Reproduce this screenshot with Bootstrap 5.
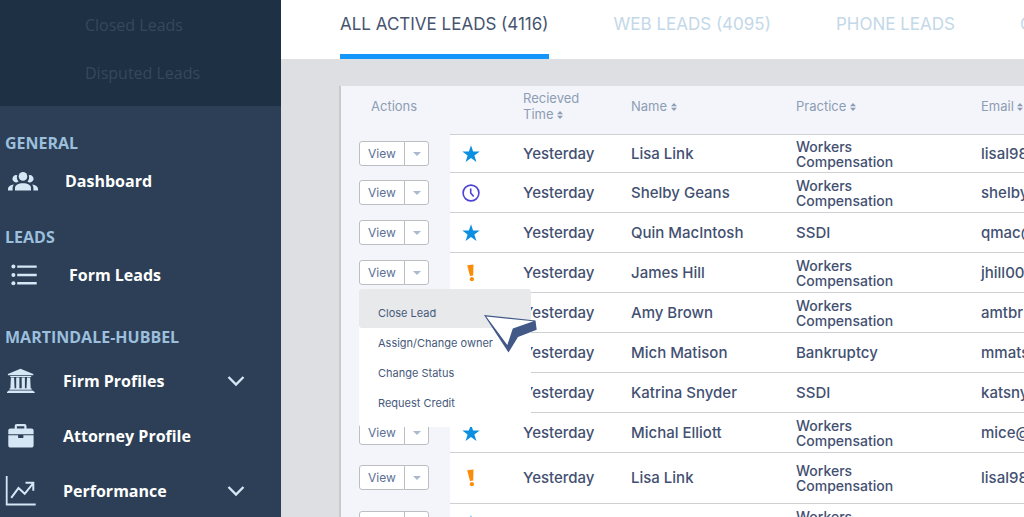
<!DOCTYPE html>
<html lang="en">
<head>
<meta charset="utf-8">
<meta name="viewport" content="width=device-width, initial-scale=1">
<title>Leads</title>
<link href="https://cdn.jsdelivr.net/npm/bootstrap@5.3.0/dist/css/bootstrap.min.css" rel="stylesheet">
<style>
  body { font-family: Inter, "Liberation Sans", sans-serif; background: #dddfe3; color: #435072; }
  a { text-decoration: none; }

  /* sidebar */
  .side { width: 281px; background: #2c3f56; font-family: "Open Sans", "Noto Sans", sans-serif; font-size: 16px; line-height: 24px; }
  .side-top { background: #1e3044; padding: 1px 0 9px 85px; }
  .side-top a { height: 48px; color: #374859; }
  .side-group { padding-top: 23px; }
  .side-group.tight { padding-top: 18px; }
  .side-group.wide { padding-top: 24px; }
  .side-group.wide .side-title { margin-bottom: 2px; }
  .side-title { height: 28px; margin-bottom: 0; padding-left: 5px; font-size: 16px; line-height: 28px; font-weight: 700; color: #9bbfdd; }
  .side-link { height: 48px; font-weight: 700; color: #fff; }
  .side-link.tall { height: 55px; }
  .side-icon { width: 65px; padding-left: 8px; color: #d5e6f5; }
  .tall .side-icon { width: 63px; padding-left: 5px; }
  .side-link .chev { margin-right: 36px; color: #d5e6f5; }

  /* tabs */
  .tabs { background: #fff; padding-left: 59px; gap: 65px; }
  .tabs a { padding: 12px 0 18px; border-bottom: 5px solid transparent; font-size: 17px; line-height: 24px; color: #c3d8e8; white-space: nowrap; }
  .tabs a.active { color: #46546f; border-color: #1496fb; }

  /* table */
  .sheet { margin: 27px 0 0 58px; border-left: 2px solid #c8cace; background: #f4f5fa; }
  .leads { width: 840px; table-layout: fixed; border-collapse: separate; border-spacing: 0; }
  .leads th { height: 48px; padding: 0 0 8px; font-size: 13px; line-height: 16px; font-weight: 400; color: #8c9db5; vertical-align: middle; white-space: nowrap; }
  .leads td { height: 40px; padding: 0; border-top: 1px solid #cfd0d3; background: #fff; font-size: 15px; line-height: 18px; font-weight: 500; vertical-align: middle; white-space: nowrap; }
  .leads tr.first td { height: 38px; }
  .leads tr.roomy td { height: 51px; }
  .leads td.act { border-top: 0; background: transparent; padding-left: 18px; }
  .leads td.two { font-size: 14px; line-height: 15px; white-space: normal; }
  .leads td.mark-cell { padding-left: 12px; }
  .c-act { width: 109px; } .c-mark { width: 73px; } .c-time { width: 108px; } .c-name { width: 165px; } .c-prac { width: 185px; }
  .leads th.act-head { padding-left: 30px; }
  .leads td svg, .side svg { display: block; }

  .split { width: 70px; height: 25px; }
  .split .btn { --bs-btn-border-color: #bcbec2; --bs-btn-bg: #fff; --bs-btn-color: #5a7195; --bs-btn-padding-x: 0; --bs-btn-padding-y: 0; --bs-btn-font-size: 12px; --bs-btn-line-height: 23px; --bs-btn-border-radius: 3px; }
  .split .view { flex: 0 0 46px; }
  .split .dropdown-toggle-split { flex: 0 0 25px; padding: 0; color: #a9b9cf; }
  .split .dropdown-toggle-split::after { border-top-width: 4px; border-left-width: 4px; border-right-width: 4px; vertical-align: 2px; }
  .menu { top: 100%; left: 0; margin-top: 4px; width: 172px; min-width: 0; padding: 0 0 9px; border: 0; border-radius: 3px; --bs-dropdown-bg: #fff; }
  .menu .dropdown-item { padding: 0 0 0 19px; font-size: 11px; line-height: 30px; color: #46597b; }
  .menu .dropdown-item.hot { padding-top: 9px; background: #e8e9eb; border-radius: 3px; }
  .pointer { position: absolute; left: 124px; top: 24px; }
</style>
</head>
<body class="vh-100 overflow-hidden">
<svg class="d-none" aria-hidden="true">
  <symbol id="star" viewBox="0 0 18 18"><path fill="#0b8fe0" d="M9 .3l2.100 6.300h6.600l-5.300 3.900 2 6.400L9 13l-5.400 3.900 2-6.400L.3 6.600h6.600z"/></symbol>
  <symbol id="clock" viewBox="0 0 18 18"><circle cx="9" cy="9" r="7.900" fill="none" stroke="#4a43d6" stroke-width="1.600"/><path d="M8.700 4.500V9l3 3.600" fill="none" stroke="#4a43d6" stroke-width="1.600"/></symbol>
  <symbol id="alert" viewBox="0 0 18 18"><path fill="#fb8c0a" d="M5.200 1.200L11.500.4l-.3 11.200-3.200.4z"/><circle cx="9.900" cy="15.200" r="2.100" fill="#fb8c0a"/></symbol>
  <symbol id="sort" viewBox="0 0 6 8"><path fill="currentColor" d="M3 0l3 3.200H0zM3 8L0 4.800h6z"/></symbol>
  <symbol id="chev" viewBox="0 0 18 12"><path d="M1.500 2l7.500 7.500L16.500 2" fill="none" stroke="currentColor" stroke-width="2.400"/></symbol>
</svg>
<div class="d-flex h-100">
  <nav class="side flex-shrink-0 overflow-hidden" aria-label="Main">
    <div class="side-top">
      <a href="#" class="d-flex align-items-center">Closed Leads</a>
      <a href="#" class="d-flex align-items-center">Disputed Leads</a>
    </div>
    <section class="side-group">
      <h2 class="side-title">GENERAL</h2>
      <a href="#" class="side-link d-flex align-items-center">
        <span class="side-icon"><svg width="30" height="19" viewBox="0 0 30 19" fill="currentColor"><circle cx="15" cy="4.400" r="4.300"/><path d="M7 18.500v-2.300c0-3 3.300-4.900 8-4.900s8 1.900 8 4.900v2.300z"/><path d="M9.300 3.300a3.600 3.600 0 1 0 1.200 6.100A6 6 0 0 1 9.300 3.300zM20.700 3.300a3.600 3.600 0 1 1-1.200 6.100 6 6 0 0 0 1.200-6.100z"/><path d="M0 18.500v-1.700c0-2.200 2.300-3.700 6-4.200-1 1-1.400 2.200-1.400 3.600v2.300zM30 18.500v-1.700c0-2.200-2.300-3.700-6-4.200 1 1 1.400 2.200 1.400 3.600v2.300z"/></svg></span>Dashboard</a>
    </section>
    <section class="side-group tight">
      <h2 class="side-title">LEADS</h2>
      <a href="#" class="side-link d-flex align-items-center">
        <span class="side-icon"><svg width="30" height="22" viewBox="0 0 30 22" fill="currentColor"><circle cx="5.400" cy="2.600" r="2"/><circle cx="5.400" cy="11" r="2"/><circle cx="5.400" cy="19.200" r="2"/><path d="M9.200 1.400h19.500v2.400H9.200zM9.200 9.800h19.500v2.400H9.200zM9.200 18h19.500v2.400H9.200z"/></svg></span><span class="ps-1">Form Leads</span></a>
    </section>
    <section class="side-group wide">
      <h2 class="side-title">MARTINDALE-HUBBEL</h2>
      <a href="#" class="side-link tall d-flex align-items-center">
        <span class="side-icon"><svg width="32" height="26" viewBox="0 0 32 26" fill="currentColor"><path d="M15.500.8L28.300 6v1.300H2.900V6zM5.200 7.900h21v1.200H5.200zM5.900 9.500h3.200l.5 11H5.400zM11.200 9.500h3.200v11h-3.200zM16.700 9.500h3.200v11h-3.200zM22 9.500h3.200l.5 11h-4.200zM4.600 20.300h22v1.500h-22zM2 24.900v-1l1.800-1.500h23.600l2.300 1.500v1z"/></svg></span>Firm Profiles
        <svg class="chev ms-auto" width="18" height="12"><use href="#chev"/></svg></a>
      <a href="#" class="side-link tall d-flex align-items-center">
        <span class="side-icon"><svg width="32" height="26" viewBox="0 0 32 26" fill="currentColor"><path fill-rule="evenodd" d="M9.700 5.500V3.200c0-1.500.8-2.200 2.200-2.200h7.400c1.400 0 2.200.7 2.200 2.200v2.300h4.800c1.500 0 2.300.8 2.300 2.300v3.500H3.300V7.800c0-1.500.8-2.300 2.300-2.300zm2.200 0h7.400V3.200h-7.400z"/><path d="M3.300 12.200h9.800v2c0 .6.300.9.900.9h3.500c.6 0 .9-.3.900-.9v-2h10.200v10c0 1.500-.8 2.300-2.300 2.300H5.600c-1.500 0-2.300-.8-2.300-2.300z"/></svg></span>Attorney Profile</a>
      <a href="#" class="side-link tall d-flex align-items-center">
        <span class="side-icon"><svg width="32" height="32" viewBox="0 0 32 32" fill="none" stroke="currentColor"><path stroke-width="1.800" d="M1.700 1v28.500h29"/><path stroke-width="2" d="M6.200 22.800l7.300-9.700 6.200 5.700 8.400-10.500M20.500 7.800h7.800v8"/></svg></span>Performance
        <svg class="chev ms-auto" width="18" height="12"><use href="#chev"/></svg></a>
    </section>
  </nav>

  <main class="flex-fill overflow-hidden">
    <nav class="tabs d-flex" aria-label="Lead lists">
      <a href="#" class="active" aria-current="page">ALL ACTIVE LEADS (4116)</a>
      <a href="#">WEB LEADS (4095)</a>
      <a href="#">PHONE LEADS</a>
      <a href="#">C</a>
    </nav>
    <div class="sheet">
      <table class="leads">
        <colgroup><col class="c-act"><col class="c-mark"><col class="c-time"><col class="c-name"><col class="c-prac"><col></colgroup>
        <thead>
          <tr>
            <th class="act-head" scope="col">Actions</th><td class="border-0 bg-transparent"></td>
            <th scope="col">Recieved<br>Time <svg width="6" height="8"><use href="#sort"/></svg></th>
            <th scope="col">Name <svg width="6" height="8"><use href="#sort"/></svg></th>
            <th scope="col">Practice <svg width="6" height="8"><use href="#sort"/></svg></th>
            <th scope="col">Email <svg width="6" height="8"><use href="#sort"/></svg></th>
          </tr>
        </thead>
        <tbody>
          <tr class="first"><td class="act"><div class="btn-group split"><button type="button" class="btn view">View</button><button type="button" class="btn dropdown-toggle dropdown-toggle-split" aria-label="More actions"></button></div></td>
            <td class="mark-cell"><svg width="18" height="18"><use href="#star"/></svg></td><td>Yesterday</td><td>Lisa Link</td><td class="two">Workers<br>Compensation</td><td>lisal98</td></tr>
          <tr><td class="act"><div class="btn-group split"><button type="button" class="btn view">View</button><button type="button" class="btn dropdown-toggle dropdown-toggle-split" aria-label="More actions"></button></div></td>
            <td class="mark-cell"><svg width="18" height="18"><use href="#clock"/></svg></td><td>Yesterday</td><td>Shelby Geans</td><td class="two">Workers<br>Compensation</td><td>shelby</td></tr>
          <tr><td class="act"><div class="btn-group split"><button type="button" class="btn view">View</button><button type="button" class="btn dropdown-toggle dropdown-toggle-split" aria-label="More actions"></button></div></td>
            <td class="mark-cell"><svg width="18" height="18"><use href="#star"/></svg></td><td>Yesterday</td><td>Quin MacIntosh</td><td>SSDI</td><td>qmac@</td></tr>
          <tr><td class="act"><div class="btn-group split"><button type="button" class="btn view">View</button><button type="button" class="btn dropdown-toggle dropdown-toggle-split" aria-label="More actions" aria-expanded="true"></button>
              <div class="dropdown-menu menu show">
                <a class="dropdown-item hot" href="#">Close Lead</a>
                <a class="dropdown-item" href="#">Assign/Change owner</a>
                <a class="dropdown-item" href="#">Change Status</a>
                <a class="dropdown-item" href="#">Request Credit</a>
                <svg class="pointer" width="56" height="42" viewBox="0 0 56 42" aria-hidden="true"><path fill="#425988" d="M1 2l51.500 5.500 1.200 9.200L35 24l-9.500 15.500z"/><path fill="#fff" d="M3.200 3.500L50.500 8.300 29.800 15.500 24.300 32z"/></svg>
              </div></div></td>
            <td class="mark-cell"><svg width="18" height="18"><use href="#alert"/></svg></td><td>Yesterday</td><td>James Hill</td><td class="two">Workers<br>Compensation</td><td>jhill00</td></tr>
          <tr><td class="act"></td><td></td><td>Yesterday</td><td>Amy Brown</td><td class="two">Workers<br>Compensation</td><td>amtbr</td></tr>
          <tr><td class="act"></td><td></td><td>Yesterday</td><td>Mich Matison</td><td>Bankruptcy</td><td>mmats</td></tr>
          <tr><td class="act"></td><td></td><td>Yesterday</td><td>Katrina Snyder</td><td>SSDI</td><td>katsny</td></tr>
          <tr><td class="act"><div class="btn-group split"><button type="button" class="btn view">View</button><button type="button" class="btn dropdown-toggle dropdown-toggle-split" aria-label="More actions"></button></div></td>
            <td class="mark-cell"><svg width="18" height="18"><use href="#star"/></svg></td><td>Yesterday</td><td>Michal Elliott</td><td class="two">Workers<br>Compensation</td><td>mice@</td></tr>
          <tr class="roomy"><td class="act"><div class="btn-group split"><button type="button" class="btn view">View</button><button type="button" class="btn dropdown-toggle dropdown-toggle-split" aria-label="More actions"></button></div></td>
            <td class="mark-cell"><svg width="18" height="18"><use href="#alert"/></svg></td><td>Yesterday</td><td>Lisa Link</td><td class="two">Workers<br>Compensation</td><td>lisal98</td></tr>
          <tr><td class="act"><div class="btn-group split"><button type="button" class="btn view">View</button><button type="button" class="btn dropdown-toggle dropdown-toggle-split" aria-label="More actions"></button></div></td>
            <td class="mark-cell"><svg width="18" height="18"><use href="#star"/></svg></td><td>Yesterday</td><td>Shelby Geans</td><td class="two">Workers<br>Compensation</td><td>shelby</td></tr>
        </tbody>
      </table>
    </div>
  </main>
</div>
<script src="https://cdn.jsdelivr.net/npm/bootstrap@5.3.0/dist/js/bootstrap.bundle.min.js"></script>
</body>
</html>
